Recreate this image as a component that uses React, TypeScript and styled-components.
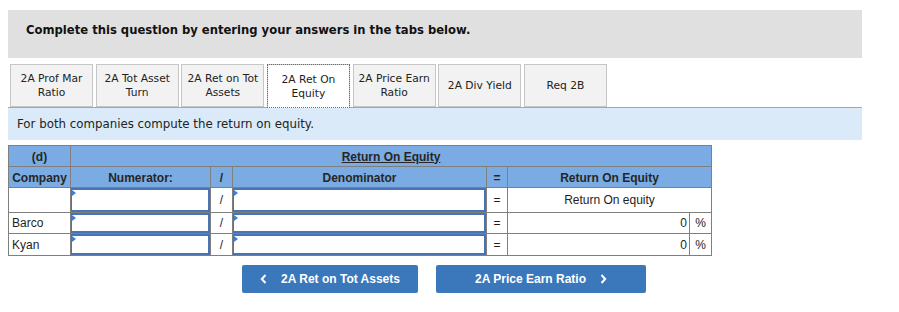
import React from "react";
import styled, { createGlobalStyle } from "styled-components";

const Global = createGlobalStyle`
  body {
    margin: 8px;
    background: #ffffff;
    font-family: "DejaVu Sans", Verdana, sans-serif;
  }
`;

const Page = styled.div`
  width: 854px;
  padding-top: 2px;
`;

const Banner = styled.div`
  height: 48px;
  box-sizing: border-box;
  background: #e0e0e0;
  padding: 12px 18px;
  font-family: "DejaVu Sans", Verdana, sans-serif;
  font-weight: bold;
  font-size: 11.6px;
  line-height: 17px;
  color: #111;
`;

const TabRow = styled.div`
  margin-top: 6px;
  display: flex;
  align-items: flex-end;
  gap: 2.67px;
  padding-left: 2px;
  border-bottom: 1px solid #a6a6a6;
`;

const Tab = styled.div<{ $active?: boolean }>`
  width: 83px;
  height: ${(p) => (p.$active ? 44 : 43)}px;
  margin-bottom: ${(p) => (p.$active ? -1 : 0)}px;
  box-sizing: border-box;
  display: flex;
  align-items: center;
  justify-content: center;
  text-align: center;
  font-family: "DejaVu Sans", Verdana, sans-serif;
  font-size: 10.7px;
  line-height: 14px;
  color: #222;
  background: ${(p) => (p.$active ? "#ffffff" : "#f2f2f2")};
  border: 1px solid #c6c6c6;
  border-bottom: ${(p) => (p.$active ? "none" : "1px solid #c6c6c6")};
  ${(p) => (p.$active ? "outline: 1px dotted #4c6f9c; outline-offset: -1px;" : "")}
  padding-top: ${(p) => (p.$active ? 1 : 0)}px;
`;

const Instruction = styled.div`
  height: 32px;
  box-sizing: border-box;
  background: #dbeaf8;
  display: flex;
  align-items: center;
  padding-left: 9px;
  font-family: "DejaVu Sans", Verdana, sans-serif;
  font-size: 11.8px;
  color: #222;
`;

const Table = styled.table`
  margin-top: 5px;
  border-collapse: collapse;
  table-layout: fixed;
  width: 703px;
  font-family: "Liberation Sans", Arial, sans-serif;
  font-size: 12px;
  color: #1e1e1e;
`;

const Head = styled.th<{ $underline?: boolean }>`
  background: #7aabe3;
  border: 1px solid #7f7f7f;
  height: 19px;
  padding: 1px 0 0;
  font-weight: bold;
  color: #262626;
  text-align: center;
  text-decoration: ${(p) => (p.$underline ? "underline" : "none")};
  white-space: nowrap;
`;

const Cell = styled.td<{ $align?: "left" | "center" | "right"; $h?: number }>`
  border: 1px solid #7f7f7f;
  height: ${(p) => p.$h ?? 20}px;
  padding: ${(p) => (p.$align === "left" ? "0 0 0 3px" : p.$align === "right" ? "0 2px 0 0" : "0")};
  text-align: ${(p) => p.$align ?? "center"};
  background: #fff;
  white-space: nowrap;
`;

const InputTd = styled.td`
  border: 1px solid #7f7f7f;
  padding: 0;
  position: relative;
`;

const InputBox = styled.div<{ $h: number }>`
  height: ${(p) => p.$h}px;
  box-sizing: border-box;
  border: 2px solid #4774b4;
  border-left-width: 1px;
  border-right-width: 2px;
  background: #fff;
`;

const Marker = styled.span`
  position: absolute;
  left: 1px;
  top: 2px;
  width: 0;
  height: 0;
  border-top: 3px solid transparent;
  border-bottom: 3px solid transparent;
  border-left: 4px solid #3d7fd4;
`;

const ButtonRow = styled.div`
  margin-top: 9px;
  display: flex;
  gap: 18px;
  padding-left: 234px;
`;

const NavButton = styled.button<{ $w: number }>`
  width: ${(p) => p.$w}px;
  height: 28px;
  background: #3b77bb;
  border: none;
  border-radius: 2px;
  color: #fff;
  font-family: "Liberation Sans", Arial, sans-serif;
  font-weight: bold;
  font-size: 12px;
  display: flex;
  align-items: center;
  justify-content: center;
  gap: 14px;
  padding: 0;
`;

const Chevron = ({ dir }: { dir: "left" | "right" }) => (
  <svg width="7" height="10" viewBox="0 0 7 10" aria-hidden>
    <path
      d={dir === "left" ? "M5.5 1 L1.8 5 L5.5 9" : "M1.5 1 L5.2 5 L1.5 9"}
      fill="none"
      stroke="#fff"
      strokeWidth="2"
    />
  </svg>
);

const InputCell = ({ h }: { h: number }) => (
  <InputTd>
    <InputBox $h={h} />
    <Marker />
  </InputTd>
);

const tabs: { label: React.ReactNode; active?: boolean }[] = [
  { label: <>2A Prof Mar<br />Ratio</> },
  { label: <>2A Tot Asset<br />Turn</> },
  { label: <>2A Ret on Tot<br />Assets</> },
  { label: <>2A Ret On<br />Equity</>, active: true },
  { label: <>2A Price Earn<br />Ratio</> },
  { label: <>2A Div Yield</> },
  { label: <>Req 2B</> },
];

const companies = ["Barco", "Kyan"];

export default function App() {
  return (
    <Page>
      <Global />
      <Banner>Complete this question by entering your answers in the tabs below.</Banner>
      <TabRow>
        {tabs.map((t, i) => (
          <Tab key={i} $active={t.active}>
            <span>{t.label}</span>
          </Tab>
        ))}
      </TabRow>
      <Instruction>For both companies compute the return on equity.</Instruction>
      <Table>
        <colgroup>
          <col style={{ width: 62 }} />
          <col style={{ width: 140 }} />
          <col style={{ width: 22 }} />
          <col style={{ width: 254 }} />
          <col style={{ width: 21 }} />
          <col style={{ width: 182 }} />
          <col style={{ width: 22 }} />
        </colgroup>
        <tbody>
          <tr>
            <Head>(d)</Head>
            <Head colSpan={6} $underline>
              Return On Equity
            </Head>
          </tr>
          <tr>
            <Head>Company</Head>
            <Head>Numerator:</Head>
            <Head>/</Head>
            <Head>Denominator</Head>
            <Head>=</Head>
            <Head colSpan={2}>Return On Equity</Head>
          </tr>
          <tr>
            <Cell $h={24} />
            <InputCell h={24} />
            <Cell $h={24}>/</Cell>
            <InputCell h={24} />
            <Cell $h={24}>=</Cell>
            <Cell $h={24} colSpan={2}>
              Return On equity
            </Cell>
          </tr>
          {companies.map((c, i) => (
            <tr key={c}>
              <Cell $align="left" $h={20 + i}>{c}</Cell>
              <InputCell h={20 + i} />
              <Cell $h={20 + i}>/</Cell>
              <InputCell h={20 + i} />
              <Cell $h={20 + i}>=</Cell>
              <Cell $align="right" $h={20 + i}>0</Cell>
              <Cell $h={20 + i}>%</Cell>
            </tr>
          ))}
        </tbody>
      </Table>
      <ButtonRow>
        <NavButton $w={176}>
          <Chevron dir="left" />
          <span>2A Ret on Tot Assets</span>
        </NavButton>
        <NavButton $w={210}>
          <span>2A Price Earn Ratio</span>
          <Chevron dir="right" />
        </NavButton>
      </ButtonRow>
    </Page>
  );
}
